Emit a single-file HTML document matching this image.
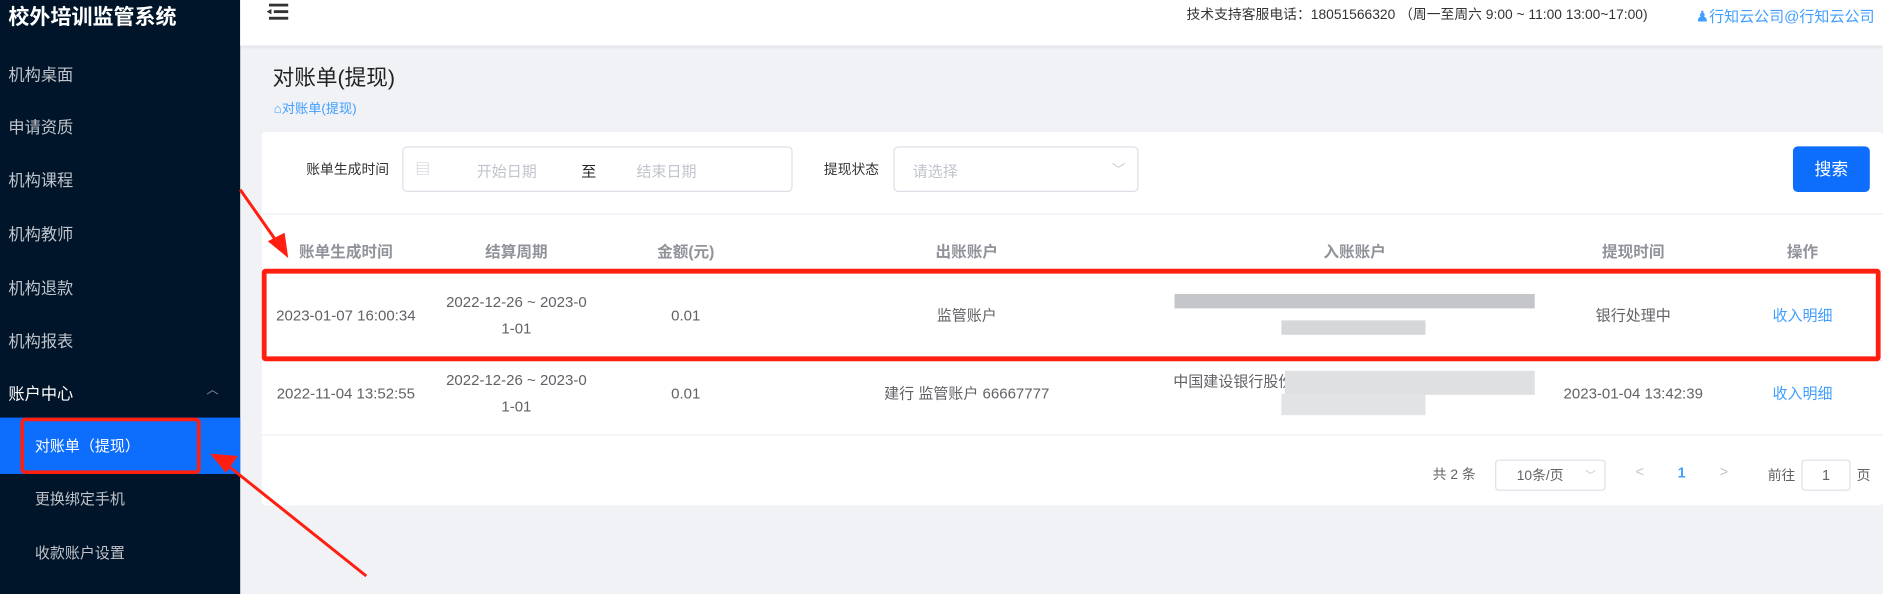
<!DOCTYPE html>
<html><head><meta charset="utf-8"><style>
*{margin:0;padding:0;box-sizing:border-box}
html,body{width:1883px;height:594px;overflow:hidden;background:#f0f2f5}
#w{position:absolute;left:0;top:0;width:1568px;height:495px;transform:scale(1.2009,1.2);transform-origin:0 0;font-family:"Liberation Sans","Noto Sans CJK SC",sans-serif;color:#606266}
.a{position:absolute;white-space:nowrap}
#side{position:absolute;left:0;top:0;width:200px;height:495px;background:#001529}
.mi{position:absolute;left:7px;font-size:13.5px;color:#c0c4cc}
.si{position:absolute;left:29px;font-size:12.5px;color:#bfc3c9}
#hdr{position:absolute;left:200px;top:0;width:1368px;height:38px;background:#fff;box-shadow:0 1px 3px rgba(0,0,0,.08)}
#card{position:absolute;left:218px;top:110px;width:1350px;height:311px;background:#fff;border-radius:3px}
.th{position:absolute;top:199px;font-size:13px;font-weight:bold;color:#909399;transform:translateX(-50%)}
.td{position:absolute;font-size:12.5px;color:#606266;transform:translateX(-50%);text-align:center;line-height:22px}
.bl{position:absolute;background:#cfd1d4}
.ln{position:absolute;left:218px;width:1350px;height:1px;background:#ebeef5}
</style></head><body><div id="w">
<div id="side">
<div class="a" style="left:7px;top:1px;font-size:17.5px;font-weight:bold;color:#fff">校外培训监管系统</div>
<div class="mi" style="top:51px">机构桌面</div>
<div class="mi" style="top:95px">申请资质</div>
<div class="mi" style="top:139px">机构课程</div>
<div class="mi" style="top:184px">机构教师</div>
<div class="mi" style="top:229px">机构退款</div>
<div class="mi" style="top:273px">机构报表</div>
<div class="mi" style="top:317px;color:#fff">账户中心</div>
<div class="a" style="left:172px;top:316px;font-size:10px;color:#8a919a">︿</div>
<div style="position:absolute;left:0;top:348px;width:200px;height:47px;background:#0d6efd"></div>
<div class="si" style="top:361px;color:#fff">对账单（提现）</div>
<div class="si" style="top:405px">更换绑定手机</div>
<div class="si" style="top:450px">收款账户设置</div>
<div style="position:absolute;left:17px;top:348px;width:150px;height:47px;border:3px solid #ff1e10;border-radius:4px"></div>
</div>
<div id="hdr">
<svg style="position:absolute;left:22px;top:3px" width="19" height="14"><rect x="2" y="0" width="16" height="2.4" fill="#333"/><rect x="6" y="5.5" width="12" height="2.4" fill="#333"/><rect x="2" y="11" width="16" height="2.4" fill="#333"/><path d="M0 6.7 L4 4.5 L4 9 Z" fill="#333"/></svg>
<div class="a" style="left:788px;top:4px;font-size:11.5px;color:#333">技术支持客服电话：18051566320 （周一至周六 9:00 ~ 11:00 13:00~17:00)</div>
<div class="a" style="left:1212px;top:3px;font-size:12.5px;color:#409eff">&#9823;行知云公司@行知云公司</div>
</div>
<div class="a" style="left:227px;top:51px;font-size:18px;color:#222">对账单(提现)</div>
<div class="a" style="left:228px;top:82px;font-size:11px;color:#409eff">⌂对账单(提现)</div>
<div id="card"></div>
<div class="a" style="left:255px;top:133px;font-size:11.5px;color:#333">账单生成时间</div>
<div style="position:absolute;left:335px;top:122px;width:325px;height:38px;border:1px solid #dcdfe6;border-radius:4px"></div>
<div class="a" style="left:346px;top:132px;font-size:12px;color:#c0c4cc">▤</div>
<div class="a" style="left:397px;top:132px;font-size:12.5px;color:#c0c4cc">开始日期</div>
<div class="a" style="left:484px;top:132px;font-size:12.5px;color:#222">至</div>
<div class="a" style="left:530px;top:132px;font-size:12.5px;color:#c0c4cc">结束日期</div>
<div class="a" style="left:686px;top:133px;font-size:11.5px;color:#333">提现状态</div>
<div style="position:absolute;left:744px;top:122px;width:204px;height:38px;border:1px solid #dcdfe6;border-radius:4px"></div>
<div class="a" style="left:760px;top:132px;font-size:12.5px;color:#c0c4cc">请选择</div>
<div class="a" style="left:926px;top:133px;font-size:11px;color:#c0c4cc">﹀</div>
<div style="position:absolute;left:1493px;top:122px;width:64px;height:38px;background:#0d6efd;border-radius:4px;color:#fff;font-size:14px;text-align:center;line-height:38px">搜索</div>
<div class="ln" style="top:178px"></div>
<div class="th" style="left:288px">账单生成时间</div>
<div class="th" style="left:430px">结算周期</div>
<div class="th" style="left:571px">金额(元)</div>
<div class="th" style="left:805px">出账账户</div>
<div class="th" style="left:1128px">入账账户</div>
<div class="th" style="left:1360px">提现时间</div>
<div class="th" style="left:1501px">操作</div>
<div class="ln" style="top:226px"></div>
<div class="ln" style="top:300px"></div>
<div class="ln" style="top:362px"></div>
<div class="td" style="left:288px;top:252px">2023-01-07 16:00:34</div>
<div class="td" style="left:430px;top:241px">2022-12-26 ~ 2023-0<br>1-01</div>
<div class="td" style="left:571px;top:252px">0.01</div>
<div class="td" style="left:805px;top:252px">监管账户</div>
<div class="bl" style="left:978px;top:245px;width:300px;height:12px;background:#c4c6c9"></div>
<div class="bl" style="left:1067px;top:267px;width:120px;height:12px;background:#d6d7d9"></div>
<div class="td" style="left:1360px;top:252px">银行处理中</div>
<div class="td" style="left:1501px;top:252px;color:#409eff">收入明细</div>
<div class="td" style="left:288px;top:317px">2022-11-04 13:52:55</div>
<div class="td" style="left:430px;top:306px">2022-12-26 ~ 2023-0<br>1-01</div>
<div class="td" style="left:571px;top:317px">0.01</div>
<div class="td" style="left:805px;top:317px">建行 监管账户 66667777</div>
<div class="a" style="left:977px;top:307px;font-size:12.5px;color:#606266">中国建设银行股份有限公</div>
<div class="bl" style="left:1070px;top:309px;width:208px;height:20px;background:#dfe0e2"></div>
<div class="bl" style="left:1067px;top:328px;width:120px;height:18px;background:#e2e3e5"></div>
<div class="td" style="left:1360px;top:317px">2023-01-04 13:42:39</div>
<div class="td" style="left:1501px;top:317px;color:#409eff">收入明细</div>
<div style="position:absolute;left:218px;top:224px;width:1348px;height:77px;border:4px solid #ff1e10;border-radius:3px"></div>
<div class="a" style="left:1193px;top:387px;font-size:11.5px">共 2 条</div>
<div style="position:absolute;left:1245px;top:383px;width:92px;height:26px;border:1px solid #dcdfe6;border-radius:3px"></div>
<div class="a" style="left:1263px;top:388px;font-size:11.5px">10条/页</div>
<div class="a" style="left:1320px;top:389px;font-size:9px;color:#c0c4cc">﹀</div>
<div class="a" style="left:1362px;top:386px;font-size:12px;color:#c0c4cc">&lt;</div>
<div class="a" style="left:1397px;top:387px;font-size:12px;color:#409eff;font-weight:bold">1</div>
<div class="a" style="left:1432px;top:386px;font-size:12px;color:#c0c4cc">&gt;</div>
<div class="a" style="left:1472px;top:388px;font-size:11.5px">前往</div>
<div style="position:absolute;left:1500px;top:383px;width:41px;height:26px;border:1px solid #dcdfe6;border-radius:3px;text-align:center;line-height:24px;font-size:12px">1</div>
<div class="a" style="left:1546px;top:388px;font-size:11.5px">页</div>
<svg style="position:absolute;left:0;top:0" width="1568" height="495">
<line x1="200" y1="158" x2="233" y2="205" stroke="#ff1e10" stroke-width="2.5"/>
<path d="M240 215 L223 201 L237 194 Z" fill="#ff1e10"/>
<line x1="305" y1="480" x2="186" y2="385" stroke="#ff1e10" stroke-width="2.5"/>
<path d="M175 378 L198 380 L188 394 Z" fill="#ff1e10"/>
</svg>
</div></body></html>
